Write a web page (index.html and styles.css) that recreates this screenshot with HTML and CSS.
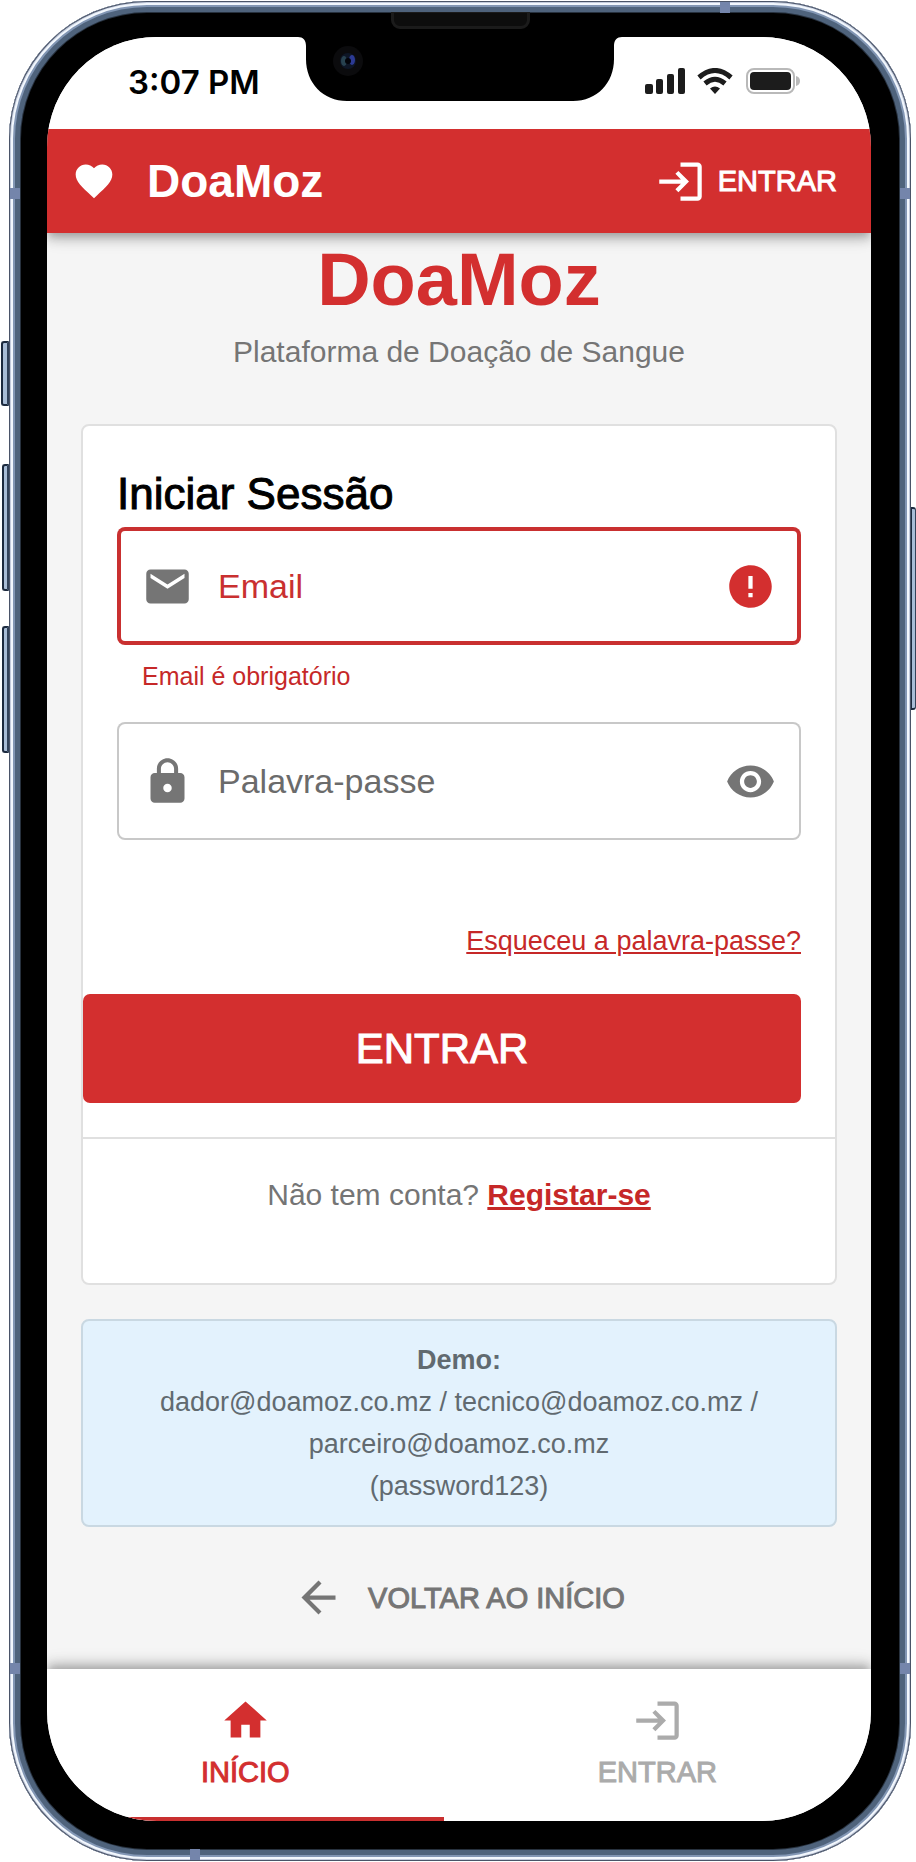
FILE: index.html
```
<!DOCTYPE html>
<html lang="pt">
<head>
  <meta charset="UTF-8">
  <meta name="viewport" content="width=device-width, initial-scale=1">
  <title>DoaMoz - Iniciar Sessão</title>
  <link rel="stylesheet" href="styles.css">
</head>
<body>

  <div class="phone">
    <!-- side keys and antenna bands -->
    <span class="key key-mute"></span>
    <span class="key key-up"></span>
    <span class="key key-down"></span>
    <span class="key key-power"></span>
    <span class="band band-lt"></span>
    <span class="band band-lb"></span>
    <span class="band band-rt"></span>
    <span class="band band-rb"></span>
    <span class="band band-top"></span>
    <span class="band band-bottom"></span>
    <span class="speaker"></span>

    <div class="screen">
      <svg class="notch" width="324" height="64" viewBox="0 0 324 64">
        <path d="M0 0C5 0 8 3 8 9V22C8 46 25 64 49 64H275C299 64 316 46 316 22V9C316 3 319 0 324 0Z"/>
        <circle cx="50" cy="24" r="15" fill="#0b0b0d"/>
        <circle cx="50" cy="24" r="8" fill="#0e1626"/>
        <ellipse cx="46" cy="24" rx="3" ry="5" fill="#27414f"/>
        <ellipse cx="54" cy="23" rx="3" ry="5" fill="#2c3a94"/>
        <circle cx="50" cy="24" r="3" fill="#03040a"/>
      </svg>

      <div class="status">
        <span class="time">3:07 PM</span>
        <svg class="signals" width="156" height="28" viewBox="0 0 156 28">
          <g fill="#1c1c1c">
            <rect x="0" y="16" width="8" height="10" rx="2"/>
            <rect x="11" y="11" width="7" height="15" rx="2"/>
            <rect x="22" y="6" width="7" height="20" rx="2"/>
            <rect x="33" y="0" width="7" height="26" rx="2"/>
            <path d="M65 20.5Q70 16.500 75 20.500L70 26Z"/>
          </g>
          <g fill="none" stroke="#1c1c1c" stroke-width="5">
            <path d="M54 9.500Q70 -4.500 86 9.500"/>
            <path d="M60 15.500Q70 7 80 15.500"/>
          </g>
          <rect x="102" y="1" width="47" height="24" rx="7" fill="none" stroke="#b9b9b9" stroke-width="2"/>
          <rect x="105" y="4" width="41" height="18" rx="4" fill="#1c1c1c"/>
          <path d="M151 8Q155 9 155 13Q155 17 151 18Z" fill="#b9b9b9"/>
        </svg>
      </div>

      <header class="appbar">
        <a class="brand" href="#">
          <svg width="44" height="44" viewBox="0 0 24 24"><path d="M12 21.350l-1.450-1.320C5.400 15.360 2 12.280 2 8.500 2 5.420 4.420 3 7.500 3c1.740 0 3.410.81 4.500 2.090C13.090 3.810 14.760 3 16.500 3 19.580 3 22 5.420 22 8.500c0 3.780-3.400 6.860-8.550 11.540z"/></svg>
          DoaMoz
        </a>
        <a class="login" href="#">
          <svg class="icon" viewBox="0 0 24 24"><path d="M11 7 9.600 8.400l2.600 2.600H2v2h10.200l-2.600 2.600L11 17l5-5zm9 12h-8v2h8c1.100 0 2-.9 2-2V5c0-1.100-.9-2-2-2h-8v2h8z"/></svg>
          ENTRAR
        </a>
      </header>

      <main class="content">
        <h1>DoaMoz</h1>
        <p class="tagline">Plataforma de Doação de Sangue</p>

        <section class="card">
          <form class="form" novalidate>
            <h2>Iniciar Sessão</h2>

            <div class="field error">
              <svg class="icon" viewBox="0 0 24 24"><path d="M20 4H4c-1.100 0-1.990.9-1.990 2L2 18c0 1.100.9 2 2 2h16c1.100 0 2-.9 2-2V6c0-1.100-.9-2-2-2zm0 4-8 5-8-5V6l8 5 8-5z"/></svg>
              <input type="email" id="email" placeholder="Email" aria-label="Email" aria-describedby="emailError">
              <svg class="icon alert" viewBox="0 0 24 24"><path d="M12 2C6.480 2 2 6.480 2 12s4.480 10 10 10 10-4.480 10-10S17.520 2 12 2zm1 15h-2v-2h2zm0-4h-2V7h2z"/></svg>
            </div>
            <p class="helper" id="emailError">Email é obrigatório</p>

            <div class="field">
              <svg class="icon" viewBox="0 0 24 24"><path d="M18 8h-1V6c0-2.760-2.240-5-5-5S7 3.240 7 6v2H6c-1.100 0-2 .9-2 2v10c0 1.100.9 2 2 2h12c1.100 0 2-.9 2-2V10c0-1.100-.9-2-2-2zm-6 9c-1.100 0-2-.9-2-2s.9-2 2-2 2 .9 2 2-.9 2-2 2zm3.100-9H8.900V6c0-1.710 1.390-3.100 3.100-3.100s3.100 1.390 3.100 3.100z"/></svg>
              <input type="password" id="password" placeholder="Palavra-passe" aria-label="Palavra-passe">
              <button class="toggle" type="button" aria-label="Mostrar palavra-passe">
                <svg class="icon" viewBox="0 0 24 24"><path d="M12 4.500C7 4.500 2.730 7.610 1 12c1.730 4.390 6 7.500 11 7.500s9.270-3.110 11-7.500c-1.730-4.390-6-7.500-11-7.500zM12 17c-2.760 0-5-2.240-5-5s2.240-5 5-5 5 2.240 5 5-2.240 5-5 5zm0-8c-1.660 0-3 1.340-3 3s1.340 3 3 3 3-1.340 3-3-1.340-3-3-3z"/></svg>
              </button>
            </div>

            <a class="forgot" href="#">Esqueceu a palavra-passe?</a>
            <button class="submit" type="submit">ENTRAR</button>
          </form>

          <p class="register">Não tem conta? <a href="#">Registar-se</a></p>
        </section>

        <div class="demo">
          <strong>Demo:</strong><br>
          dador@doamoz.co.mz / tecnico@doamoz.co.mz / parceiro@doamoz.co.mz<br>
          (password123)
        </div>

        <a class="back" href="#">
          <svg class="icon" viewBox="0 0 24 24"><path d="M20 11H7.830l5.590-5.590L12 4l-8 8 8 8 1.410-1.410L7.830 13H20z"/></svg>
          VOLTAR AO INÍCIO
        </a>
      </main>

      <nav class="tabs">
        <a class="tab active" href="#">
          <svg class="icon" viewBox="0 0 24 24"><path d="M10 20v-6h4v6h5v-8h3L12 3 2 12h3v8z"/></svg>
          INÍCIO
        </a>
        <a class="tab" href="#">
          <svg class="icon" viewBox="0 0 24 24"><path d="M11 7 9.600 8.400l2.600 2.600H2v2h10.200l-2.600 2.600L11 17l5-5zm9 12h-8v2h8c1.100 0 2-.9 2-2V5c0-1.100-.9-2-2-2h-8v2h8z"/></svg>
          ENTRAR
        </a>
      </nav>
    </div>
  </div>

</body>
</html>
```
FILE: styles.css
```
* {
  box-sizing: border-box;
}
body {
  margin: 0;
  padding: 1px 5px 0 9px;
  background: #fff;
  font-family: "Liberation Sans", Arial, sans-serif;
  color: #757575;
}
h1, h2, p {
  margin: 0;
}
a {
  color: inherit;
  text-decoration: none;
}
svg {
  display: block;
  flex: none;
  fill: currentColor;
}
.icon {
  width: 51px;
  height: 51px;
}

/* phone body */
.phone {
  position: relative;
  padding: 36px 40px 40px 38px;
  border-radius: 138px;
  background: #000;
  box-shadow:
    inset 0 0 0 1px #4a5468,
    inset 0 0 0 2px #c3cbdc,
    inset 0 0 0 4px #f2f7fd,
    inset 0 0 0 6px #8296b4,
    inset 0 0 0 11px #4f637c,
    inset 0 0 0 12px #27313e;
}
.key {
  position: absolute;
  left: -8px;
  width: 8px;
  border: 2px solid #1c2a3e;
  border-right-color: #33435a;
  border-radius: 3px 0 0 3px;
  background: #a9bdd6;
}
.key-mute { top: 340px; height: 65px; }
.key-up { top: 463px; height: 127px; }
.key-down { top: 625px; height: 127px; }
.key-up, .key-down {
  left: -7px;
  width: 7px;
}
.key-power {
  top: 506px;
  left: auto;
  right: -5px;
  width: 5px;
  height: 203px;
  border-width: 2px 1px;
  border-radius: 0 3px 3px 0;
}
.band {
  position: absolute;
  width: 10px;
  height: 11px;
  background: #7485ab;
}
.band-lt { top: 187px; left: 1px; }
.band-rt { top: 187px; right: 1px; }
.band-lb { bottom: 187px; left: 1px; }
.band-rb { bottom: 187px; right: 1px; }
.band-top { top: 1px; right: 181px; }
.band-bottom { bottom: 1px; left: 181px; }
.speaker {
  position: absolute;
  top: 11px;
  left: 50%;
  width: 139px;
  height: 17px;
  margin-left: -69px;
  border: 3px solid #1b1b1b;
  border-top-width: 1px;
  border-radius: 0 0 9px 9px;
  background: #0d0d0d;
}

/* screen */
.screen {
  position: relative;
  overflow: hidden;
  border-radius: 110px;
  background: #f5f5f5;
}
.notch {
  position: absolute;
  z-index: 2;
  top: 0;
  left: 50%;
  margin-left: -161px;
  fill: #000;
}
.status {
  position: relative;
  z-index: 1;
  display: flex;
  align-items: center;
  justify-content: space-between;
  height: 92px;
  padding: 0 70px 2px 81px;
  background: #fff;
}
.time {
  font: 600 33px/40px Inter, sans-serif;
  color: #000;
}
.appbar {
  position: relative;
  display: flex;
  align-items: center;
  justify-content: space-between;
  height: 104px;
  padding: 0 34px 0 25px;
  background: #d32f2f;
  color: #fff;
  box-shadow: 0 4px 8px -2px rgba(0,0,0,0.2), 0 8px 10px rgba(0,0,0,0.14), 0 2px 20px rgba(0,0,0,0.12);
}
.brand {
  display: flex;
  align-items: center;
  gap: 31px;
  font-size: 46px;
  font-weight: bold;
}
.login, .back, .tab {
  display: flex;
  align-items: center;
  font-size: 29px;
  line-height: 40px;
  -webkit-text-stroke: 1px currentColor;
}
.login {
  gap: 12px;
}

.content {
  padding: 10px 34px 46px;
}
h1 {
  font-size: 74px;
  line-height: 74px;
  text-align: center;
  color: #d32f2f;
}
.tagline {
  margin-top: 13px;
  font-size: 30px;
  line-height: 44px;
  text-align: center;
}

/* login card */
.card {
  margin-top: 50px;
  border: 2px solid #e0e0e0;
  border-radius: 8px;
  background: #fff;
}
.form {
  display: flex;
  flex-direction: column;
  padding: 40px 34px 34px;
  border-bottom: 2px solid #e0e0e0;
}
h2 {
  margin-bottom: 5px;
  font-size: 44px;
  font-weight: normal;
  line-height: 56px;
  color: #000;
  -webkit-text-stroke: 1px #000;
}
.field {
  display: flex;
  align-items: center;
  gap: 25px;
  height: 118px;
  padding: 0 25px;
  border-radius: 8px;
  box-shadow: inset 0 0 0 2px #c8c8c8;
}
.field.error {
  box-shadow: inset 0 0 0 4px #c93030;
}
.field input {
  flex: 1;
  min-width: 0;
  height: 60px;
  padding: 0;
  border: 0;
  outline: 0;
  background: none;
  font: 34px "Liberation Sans", Arial, sans-serif;
  color: #212121;
}
.field input::placeholder {
  color: #6b6b6b;
  opacity: 1;
}
.field.error input::placeholder {
  color: #c93030;
}
.alert {
  color: #d32f2f;
}
.toggle {
  padding: 0;
  border: 0;
  background: none;
  color: inherit;
}
.helper {
  margin: 14px 25px 29px;
  font-size: 25px;
  line-height: 34px;
  color: #c62828;
}
.forgot {
  align-self: flex-end;
  margin: 83px 0 35px;
  font-size: 27px;
  line-height: 36px;
  color: #c62828;
  text-decoration: underline;
}
.submit {
  height: 109px;
  margin-left: -34px;
  border: 0;
  border-radius: 7px;
  background: #d32f2f;
  font: 42px "Liberation Sans", Arial, sans-serif;
  color: #fff;
  -webkit-text-stroke: 1px #fff;
}
.register {
  padding: 34px 34px 66px;
  font-size: 30px;
  line-height: 44px;
  text-align: center;
}
.register a {
  font-weight: bold;
  color: #c62828;
  text-decoration: underline;
}

.demo {
  margin-top: 34px;
  padding: 18px 34px;
  border: 2px solid #c9d8e2;
  border-radius: 8px;
  background: #e3f2fd;
  font-size: 27px;
  line-height: 42px;
  text-align: center;
  color: #616a70;
}
.back {
  justify-content: center;
  gap: 24px;
  margin-top: 45px;
}

/* bottom navigation */
.tabs {
  position: relative;
  display: flex;
  background: #fff;
  box-shadow: 0 -4px 8px -2px rgba(0,0,0,0.2), 0 -8px 10px rgba(0,0,0,0.1), 0 -2px 20px rgba(0,0,0,0.12);
}
.tab {
  flex: 1 1 auto;
  flex-direction: column;
  gap: 6px;
  padding: 26px 0 25px;
  border-bottom: 4px solid transparent;
  color: #ababab;
}
.tab.active {
  border-bottom-color: #c93030;
  color: #d32f2f;
}
```
